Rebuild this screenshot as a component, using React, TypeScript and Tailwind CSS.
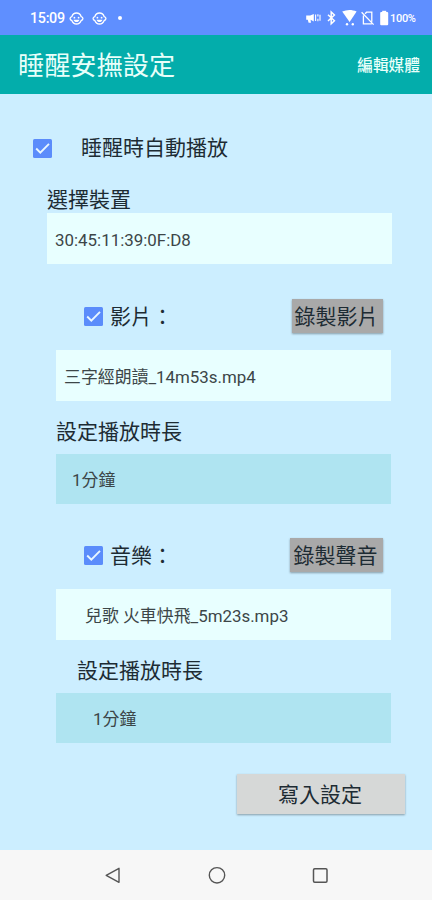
import React from 'react';

const Checkbox: React.FC = () => (
  <svg className="h-[19px] w-[19px] shrink-0" viewBox="0 0 19 19" role="checkbox" aria-checked="true">
    <rect width="19" height="19" rx="1.5" fill="#5b8cfb" />
    <path d="M3.2 9.5l4.1 4.1L16 4.9" fill="none" stroke="#e9f7ff" strokeWidth="1.9" />
  </svg>
);

const FaceIcon: React.FC = () => (
  <svg className="h-[13px] w-[15px]" viewBox="0 0 15 13" fill="none" stroke="#fff">
    <path d="M2.8 4.7C3.6 2.2 5.3 1 7.5 1s3.9 1.2 4.7 3.7c2.3.5 2.3 3.3 0 3.8-.9 2.3-2.5 3.5-4.7 3.5s-3.8-1.2-4.7-3.5c-2.3-.5-2.3-3.3 0-3.8z" strokeWidth="1.3" />
    <path d="M4.5 7.8h6c-.6 1.6-1.6 2.3-3 2.3s-2.4-.7-3-2.3z" fill="#fff" stroke="none" />
    <circle cx="5.4" cy="5.7" r="0.9" fill="#fff" stroke="none" />
    <circle cx="9.6" cy="5.7" r="0.9" fill="#fff" stroke="none" />
  </svg>
);

const StatusIcons: React.FC = () => (
  <svg className="h-4 w-[84px]" viewBox="0 0 84 16" fill="#fff">
    {/* volume */}
    <path d="M1.2 5.6h4L8.8 4v7.6L5.6 9.8l.4 3H3.6l-.8-3H1.2z" />
    <path d="M10.6 4.6v6.4M12.9 4.2v2.4M12.9 8.8v2.4M15 4.8v6" fill="none" stroke="#fff" strokeWidth="1.1" />
    {/* bluetooth */}
    <path d="M23 4.8l6.4 6-3.2 3V2l3.2 3-6.4 6" fill="none" stroke="#fff" strokeWidth="1.5" />
    {/* wifi */}
    <path d="M37.2 1.6c4.6-2 9.8-2 14.4 0L44.6 12z" />
    <circle cx="42" cy="14.2" r="1.2" />
    <circle cx="47.8" cy="14.2" r="1.2" />
    {/* no sim */}
    <path d="M60 3.8l1.6-1.6h5.2v9.6M58.4 5.6v8.2h8.4M56.6 2.2l12 12.4" fill="none" stroke="#fff" strokeWidth="1.3" />
    {/* battery */}
    <rect x="75.2" y="2" width="8" height="13.2" rx="1" />
    <rect x="77.2" y="0.8" width="4" height="2" />
  </svg>
);

const StatusBar: React.FC = () => (
  <div className="flex h-[35px] items-center bg-[#5f8fff] pr-4 pl-[30px] pt-[1px] text-white">
    <span className="w-[39px] pt-[1px] text-[14.3px] font-medium tracking-[-0.3px]">15:09</span>
    <FaceIcon />
    <span className="w-[8px]" />
    <FaceIcon />
    <span className="ml-[11px] h-1 w-1 rounded-full bg-white" />
    <div className="ml-auto flex items-center">
      <StatusIcons />
      <span className="ml-[1px] w-[26px] text-[11px] font-medium tracking-[-0.3px]">100%</span>
    </div>
  </div>
);

interface FieldProps {
  children: React.ReactNode;
  className: string;
}

const Field: React.FC<FieldProps> = ({ children, className }) => (
  <div className={`flex items-center pt-[3px] text-[16.9px] text-[#3c4648] ${className}`}>{children}</div>
);

interface MediaHeaderProps {
  label: string;
  action: string;
  buttonClass: string;
}

const MediaHeader: React.FC<MediaHeaderProps> = ({ label, action, buttonClass }) => (
  <div className="flex h-[34px] items-center pr-[49px] pl-[84px]">
    <Checkbox />
    <span className="ml-[7px] pt-[2px]">{label}</span>
    <button
      className={`ml-auto flex h-[34px] items-center justify-center whitespace-nowrap bg-[#a9a9a9] pt-[2px] pr-[2px] shadow-[0_1px_2px_rgba(0,0,0,0.35)] ${buttonClass}`}
    >
      {action}
    </button>
  </div>
);

const NavBar: React.FC = () => (
  <div className="flex h-[50px] items-center justify-between bg-[#f7f7f7] pr-[103px] pl-[104px]">
    <svg className="h-[18px] w-[18px]" viewBox="0 0 18 18" fill="none" stroke="#555" strokeWidth="1.4" strokeLinejoin="round">
      <path d="M15 2.3v14L2.2 9.3z" />
    </svg>
    <svg className="h-[18px] w-[18px]" viewBox="0 0 18 18" fill="none" stroke="#555" strokeWidth="1.4">
      <circle cx="9" cy="9.3" r="7.7" />
    </svg>
    <svg className="h-[18px] w-[18px]" viewBox="0 0 18 18" fill="none" stroke="#555" strokeWidth="1.5">
      <rect x="2.5" y="2.8" width="13.5" height="13.5" rx="1.2" />
    </svg>
  </div>
);

const App: React.FC = () => {
  return (
    <div className="flex h-[900px] w-[432px] flex-col overflow-hidden bg-[#cceeff] font-[Roboto,'Noto_Sans_CJK_TC',sans-serif] text-[21px] leading-none text-[#1d2b33]">
      <StatusBar />
      <header className="flex h-[59px] items-center justify-between bg-[#03adab] pr-3 pl-[18px] text-[#e8fffa]">
        <h1 className="pt-[4px] text-[26.2px]">睡醒安撫設定</h1>
        <button className="pt-[2px] text-[15.7px] font-medium">編輯媒體</button>
      </header>

      <main className="flex flex-1 flex-col">
        <div className="mt-[38px] flex h-8 items-center pl-[33px]">
          <Checkbox />
          <span className="ml-[29px] pt-[1px]">睡醒時自動播放</span>
        </div>

        <div className="mt-[21px] flex h-7 items-center pt-[2px] pl-[47px]">選擇裝置</div>
        <Field className="ml-[47px] h-[51px] w-[345px] bg-[#e8ffff] pl-[8px]">30:45:11:39:0F:D8</Field>

        <div className="mt-[35px]">
          <MediaHeader label="影片：" action="錄製影片" buttonClass="w-[91px]" />
        </div>
        <Field className="mt-[17px] ml-[56px] h-[51px] w-[335px] bg-[#e8ffff] pl-[8px]">三字經朗讀_14m53s.mp4</Field>
        <div className="mt-[17px] flex h-7 items-center pt-[1px] pl-[56px]">設定播放時長</div>
        <Field className="mt-[8px] ml-[56px] h-[50px] w-[335px] bg-[#afe4f1] pl-[16px]">1分鐘</Field>

        <div className="mt-[34px]">
          <MediaHeader label="音樂：" action="錄製聲音" buttonClass="w-[93px]" />
        </div>
        <Field className="mt-[17px] ml-[56px] h-[51px] w-[335px] bg-[#e8ffff] pl-[29px]">兒歌 火車快飛_5m23s.mp3</Field>
        <div className="mt-[17px] flex h-7 items-center pt-[1px] pl-[77px]">設定播放時長</div>
        <Field className="mt-[8px] ml-[56px] h-[50px] w-[335px] bg-[#afe4f1] pl-[37px]">1分鐘</Field>

        <button className="mt-[31px] ml-[237px] flex h-[40px] w-[168px] items-center justify-center bg-[#d6d8d7] pt-[2px] pr-[2px] shadow-[0_1px_2px_rgba(0,0,0,0.35)]">
          寫入設定
        </button>
      </main>

      <NavBar />
    </div>
  );
};

export default App;
